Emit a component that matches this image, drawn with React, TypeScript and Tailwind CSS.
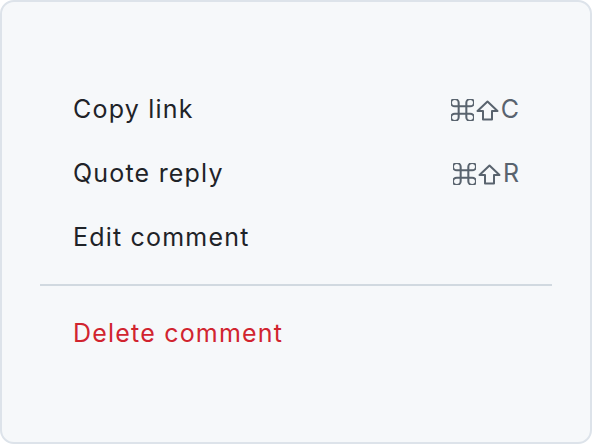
import React from "react";

const Cmd = () => (
  <svg width="23" height="22" viewBox="3 3 18 18" fill="none" stroke="#59636e" strokeWidth="1.6" strokeLinecap="round" strokeLinejoin="round" preserveAspectRatio="none">
    <path d="M15 6v12a3 3 0 1 0 3-3H6a3 3 0 1 0 3 3V6a3 3 0 1 0-3 3h12a3 3 0 1 0-3-3" />
  </svg>
);

const Shift = () => (
  <svg width="23" height="21" viewBox="0 0 23 21" fill="none" stroke="#59636e" strokeWidth="2" strokeLinejoin="round">
    <path d="M11.5 1.5 L21.5 11 H16 V19.5 H7 V11 H1.5 Z" />
  </svg>
);

const Shortcut = ({ k }: { k: string }) => (
  <span className="flex items-center text-[25px] text-[#59636e]">
    <Cmd />
    <span className="ml-[2px]"><Shift /></span>
    <span className="ml-[2px]">{k}</span>
  </span>
);

const Item = ({ label, shortcut, danger }: { label: string; shortcut?: string; danger?: boolean }) => (
  <div className="flex h-[64px] items-center justify-between px-[33px]">
    <span className={danger ? "text-[#d1242f] tracking-[1.2px]" : "text-[#1f2328] tracking-[1.2px]"}>{label}</span>
    {shortcut && <Shortcut k={shortcut} />}
  </div>
);

export default function App() {
  return (
    <div
      className="h-[444px] w-[592px] rounded-[14px] border-2 border-[#dde3ea] bg-[#f6f8fa] px-[38px] pt-[76px] text-[25px]"
      style={{ fontFamily: "Inter, 'DejaVu Sans', sans-serif" }}
    >
      <Item label="Copy link" shortcut="C" />
      <Item label="Quote reply" shortcut="R" />
      <Item label="Edit comment" />
      <div className="mt-[14px] mb-[16px] h-[2px] w-full bg-[#d1d9e0]" />
      <Item label="Delete comment" danger />
    </div>
  );
}
